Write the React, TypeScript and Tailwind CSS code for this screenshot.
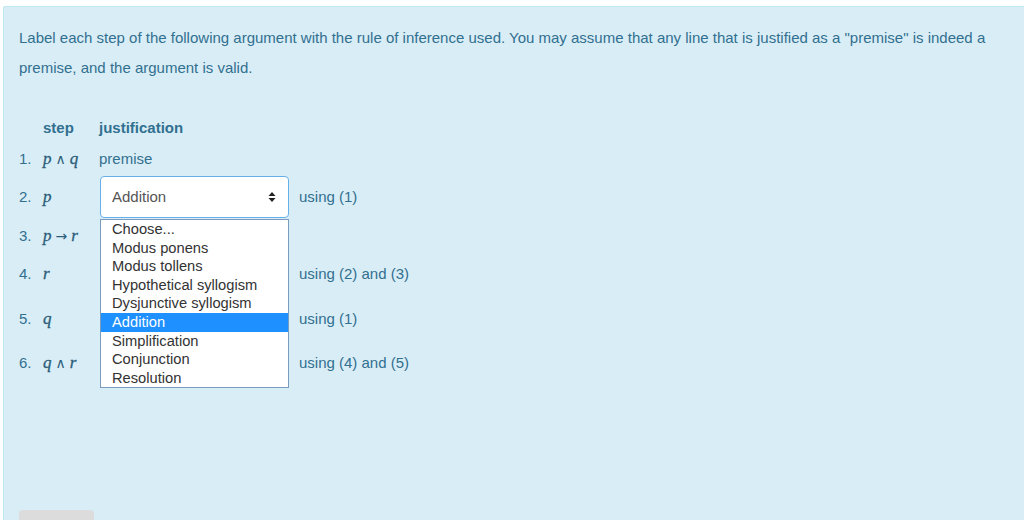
const options = [
  "Choose...",
  "Modus ponens",
  "Modus tollens",
  "Hypothetical syllogism",
  "Dysjunctive syllogism",
  "Addition",
  "Simplification",
  "Conjunction",
  "Resolution",
];

function Sel({ open, value }: { open?: boolean; value?: string }) {
  return (
    <div className="relative ml-[1px] w-[189px] h-[42px]">
      <div className="flex items-center justify-between h-full bg-white border border-[#66afe9] rounded-[4px] pl-[11px] pr-[12px] text-[15px] text-[#555]">
        <span>{value}</span>
        <svg width="8" height="12" viewBox="0 0 8 12">
          <path d="M4 1 L7.5 5 L0.5 5 Z M4 11 L7.5 7 L0.5 7 Z" fill="#222" />
        </svg>
      </div>
      {open && (
        <ul className="absolute left-0 top-[43px] z-10 w-[189px] bg-white border border-[#7a9cc0] text-[14.7px] leading-[18.6px] text-[#333]">
          {options.map((o) => (
            <li
              key={o}
              className={
                o === "Addition"
                  ? "pl-[11px] bg-[#1e90ff] text-white"
                  : "pl-[11px]"
              }
            >
              {o}
            </li>
          ))}
        </ul>
      )}
    </div>
  );
}

function M({ children }: { children: React.ReactNode }) {
  return (
    <span className="font-['Liberation_Serif',serif] text-[17px] text-[#2c5d78]">
      {children}
    </span>
  );
}

function V({ c }: { c: string }) {
  return <i className="[-webkit-text-stroke:0.3px_#2c5d78]">{c}</i>;
}

function Op({ c }: { c: string }) {
  return (
    <span className="font-['DejaVu_Sans',sans-serif] text-[14px] px-[4px]">{c}</span>
  );
}

export default function App() {
  const rows = [
    { n: "1.", m: <><V c="p" /><Op c="∧" /><V c="q" /></>, j: <span>premise</span>, h: "h-[34px]" },
    { n: "2.", m: <V c="p" />, j: <Sel open value="Addition" />, u: "using (1)", h: "h-[42px]" },
    { n: "3.", m: <><V c="p" /><Op c="→" /><V c="r" /></>, j: <span />, h: "h-[36px]" },
    { n: "4.", m: <V c="r" />, j: <Sel />, u: "using (2) and (3)", h: "h-[40px]" },
    { n: "5.", m: <V c="q" />, j: <Sel />, u: "using (1)", h: "h-[42px] mt-[4px]" },
    { n: "6.", m: <><V c="q" /><Op c="∧" /><V c="r" /></>, j: <Sel />, u: "using (4) and (5)", h: "h-[42px] mt-[2px]" },
  ];
  return (
    <div className="w-[1024px] h-[520px] overflow-hidden bg-white pt-[6px] pl-[3px] font-['Liberation_Sans',Arial,sans-serif]">
      <div className="flex flex-col h-[545px] w-[1030px] bg-[#d9edf7] border border-[#bce8f1] rounded-[2px] pl-[15px] pt-[16px] text-[#31708f]">
        <p className="text-[15px] leading-[30px] w-[990px]">
          Label each step of the following argument with the rule of inference used. You may assume that any line that is justified as a "premise" is indeed a premise, and the argument is valid.
        </p>
        <div className="mt-[31px] text-[15px]">
          <div className="flex items-center h-[28px] font-bold">
            <span className="w-[24px]" />
            <span className="w-[56px]">step</span>
            <span>justification</span>
          </div>
          {rows.map((r) => (
            <div key={r.n} className={`flex items-center ${r.h}`}>
              <span className="w-[24px]">{r.n}</span>
              <span className="w-[56px] whitespace-nowrap">
                <M>{r.m}</M>
              </span>
              <span className="w-[200px]">{r.j}</span>
              {r.u && <span>{r.u}</span>}
            </div>
          ))}
        </div>
        <div className="mt-auto mb-[10px] w-[75px] h-[30px] rounded-[4px] bg-[#dcdcdc]" />
      </div>
    </div>
  );
}
